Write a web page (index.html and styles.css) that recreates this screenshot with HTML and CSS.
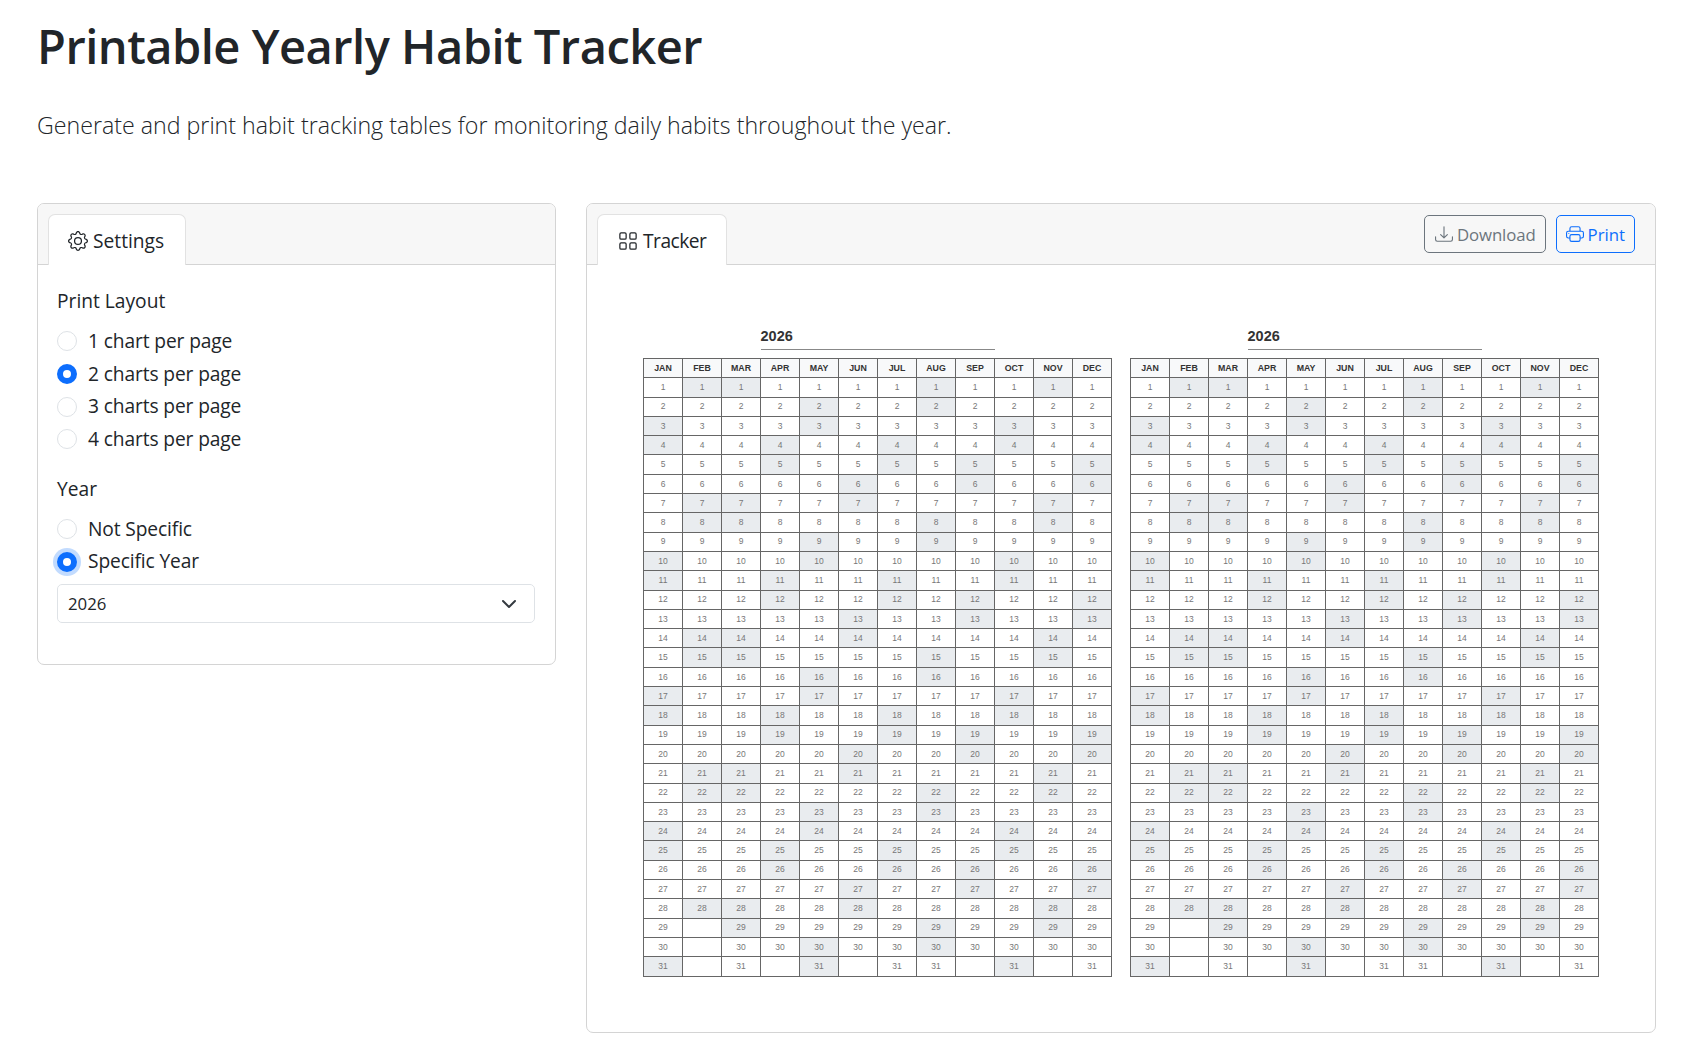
FILE: index.html
```html
<!DOCTYPE html>
<html lang="en">
<head>
  <meta charset="UTF-8">
  <meta name="viewport" content="width=device-width, initial-scale=1.0">
  <title>Printable Yearly Habit Tracker</title>
  <link rel="stylesheet" href="styles.css">
</head>
<body>
  <header class="page-head">
    <h1>Printable Yearly Habit Tracker</h1>
    <p class="lead">Generate and print habit tracking tables for monitoring daily habits throughout the year.</p>
  </header>

  <main class="layout">
    <section class="card settings">
      <div class="card-header">
        <div class="tab">
          <svg class="icon" viewBox="0 0 16 16" fill="currentColor"><path d="M8 4.754a3.246 3.246 0 1 0 0 6.492 3.246 3.246 0 0 0 0-6.492M5.754 8a2.246 2.246 0 1 1 4.492 0 2.246 2.246 0 0 1-4.492 0"/><path d="M9.796 1.343c-.527-1.79-3.065-1.79-3.592 0l-.094.319a.873.873 0 0 1-1.255.52l-.292-.16c-1.64-.892-3.433.902-2.54 2.541l.159.292a.873.873 0 0 1-.52 1.255l-.319.094c-1.79.527-1.79 3.065 0 3.592l.319.094a.873.873 0 0 1 .52 1.255l-.16.292c-.892 1.64.901 3.434 2.541 2.54l.292-.159a.873.873 0 0 1 1.255.52l.094.319c.527 1.79 3.065 1.79 3.592 0l.094-.319a.873.873 0 0 1 1.255-.52l.292.16c1.64.893 3.434-.902 2.54-2.541l-.159-.292a.873.873 0 0 1 .52-1.255l.319-.094c1.79-.527 1.79-3.065 0-3.592l-.319-.094a.873.873 0 0 1-.52-1.255l.16-.292c.893-1.64-.902-3.433-2.541-2.54l-.292.159a.873.873 0 0 1-1.255-.52zm-2.633.283c.246-.835 1.428-.835 1.674 0l.094.319a1.873 1.873 0 0 0 2.693 1.115l.291-.16c.764-.415 1.6.42 1.184 1.185l-.159.292a1.873 1.873 0 0 0 1.116 2.692l.318.094c.835.246.835 1.428 0 1.674l-.319.094a1.873 1.873 0 0 0-1.115 2.693l.16.291c.415.764-.42 1.6-1.185 1.184l-.291-.159a1.873 1.873 0 0 0-2.693 1.116l-.094.318c-.246.835-1.428.835-1.674 0l-.094-.319a1.873 1.873 0 0 0-2.692-1.115l-.292.16c-.764.415-1.6-.42-1.184-1.185l.159-.291A1.873 1.873 0 0 0 1.945 8.93l-.319-.094c-.835-.246-.835-1.428 0-1.674l.319-.094A1.873 1.873 0 0 0 3.06 4.377l-.16-.292c-.415-.764.42-1.6 1.185-1.184l.292.159a1.873 1.873 0 0 0 2.692-1.115z"/></svg>
          Settings
        </div>
      </div>
      <div class="card-body">
        <div class="group-label">Print Layout</div>
        <label class="radio"><input type="radio" name="layout"> 1 chart per page</label>
        <label class="radio"><input type="radio" name="layout" checked> 2 charts per page</label>
        <label class="radio"><input type="radio" name="layout"> 3 charts per page</label>
        <label class="radio"><input type="radio" name="layout"> 4 charts per page</label>

        <div class="group-label year-label">Year</div>
        <label class="radio"><input type="radio" name="year"> Not Specific</label>
        <label class="radio"><input type="radio" name="year" class="focused" checked> Specific Year</label>
        <select class="year-select">
          <option>2026</option>
          <option>2027</option>
        </select>
      </div>
    </section>

    <section class="card tracker">
      <div class="card-header">
        <div class="tab tab-tracker">
          <svg class="icon" viewBox="0 0 16 16" fill="currentColor"><path d="M1 2.5A1.5 1.5 0 0 1 2.5 1h3A1.5 1.5 0 0 1 7 2.5v3A1.5 1.5 0 0 1 5.5 7h-3A1.5 1.5 0 0 1 1 5.5zM2.5 2a.5.5 0 0 0-.5.5v3a.5.5 0 0 0 .5.5h3a.5.5 0 0 0 .5-.5v-3a.5.5 0 0 0-.5-.5zm6.5.5A1.5 1.5 0 0 1 10.5 1h3A1.5 1.5 0 0 1 15 2.5v3A1.5 1.5 0 0 1 13.5 7h-3A1.5 1.5 0 0 1 9 5.5zm1.5-.5a.5.5 0 0 0-.5.5v3a.5.5 0 0 0 .5.5h3a.5.5 0 0 0 .5-.5v-3a.5.5 0 0 0-.5-.5zM1 10.5A1.5 1.5 0 0 1 2.5 9h3A1.5 1.5 0 0 1 7 10.5v3A1.5 1.5 0 0 1 5.5 15h-3A1.5 1.5 0 0 1 1 13.5zm1.5-.5a.5.5 0 0 0-.5.5v3a.5.5 0 0 0 .5.5h3a.5.5 0 0 0 .5-.5v-3a.5.5 0 0 0-.5-.5zm6.5.5A1.5 1.5 0 0 1 10.5 9h3a1.5 1.5 0 0 1 1.5 1.5v3a1.5 1.5 0 0 1-1.5 1.5h-3A1.5 1.5 0 0 1 9 13.5zm1.5-.5a.5.5 0 0 0-.5.5v3a.5.5 0 0 0 .5.5h3a.5.5 0 0 0 .5-.5v-3a.5.5 0 0 0-.5-.5z"/></svg>
          Tracker
        </div>
        <div class="actions">
          <button class="btn btn-grey">
            <svg class="icon" viewBox="0 0 16 16" fill="currentColor"><path d="M.5 9.9a.5.5 0 0 1 .5.5v2.5a1 1 0 0 0 1 1h12a1 1 0 0 0 1-1v-2.5a.5.5 0 0 1 1 0v2.5a2 2 0 0 1-2 2H2a2 2 0 0 1-2-2v-2.5a.5.5 0 0 1 .5-.5"/><path d="M7.646 11.854a.5.5 0 0 0 .708 0l3-3a.5.5 0 0 0-.708-.708L8.5 10.293V1.5a.5.5 0 0 0-1 0v8.793L5.354 8.146a.5.5 0 1 0-.708.708z"/></svg>
            Download
          </button>
          <button class="btn btn-blue">
            <svg class="icon" viewBox="0 0 16 16" fill="currentColor"><path d="M2.5 8a.5.5 0 1 0 0-1 .5.5 0 0 0 0 1"/><path d="M5 1a2 2 0 0 0-2 2v2H2a2 2 0 0 0-2 2v3a2 2 0 0 0 2 2h1v1a2 2 0 0 0 2 2h6a2 2 0 0 0 2-2v-1h1a2 2 0 0 0 2-2V7a2 2 0 0 0-2-2h-1V3a2 2 0 0 0-2-2zM4 3a1 1 0 0 1 1-1h6a1 1 0 0 1 1 1v2H4zm1 5a2 2 0 0 0-2 2v1H2a1 1 0 0 1-1-1V7a1 1 0 0 1 1-1h12a1 1 0 0 1 1 1v3a1 1 0 0 1-1 1h-1v-1a2 2 0 0 0-2-2zm7 2v3a1 1 0 0 1-1 1H5a1 1 0 0 1-1-1v-3a1 1 0 0 1 1-1h6a1 1 0 0 1 1 1"/></svg>
            Print
          </button>
        </div>
      </div>
      <div class="charts">
        <div class="chart"><div class="chart-title">2026</div><table class="chart-table"></table></div>
        <div class="chart"><div class="chart-title">2026</div><table class="chart-table"></table></div>
      </div>
    </section>
  </main>

  <script src="script.js"></script>
</body>
</html>
```
FILE: styles.css
```css
* {
  box-sizing: border-box;
}
body {
  margin: 0;
  padding: 0 36px 22px 37px;
  font-family: "Open Sans", "Noto Sans", sans-serif;
  font-size: 19.2px;
  line-height: 1.5;
  color: #212529;
  background-color: #fff;
}
.page-head {
  height: 203px;
  padding-top: 17px;
}
h1 {
  margin: 0;
  font-size: 47px;
  font-weight: 600;
  line-height: 58px;
  letter-spacing: -0.5px;
}
.lead {
  margin: 32px 0 0;
  font-size: 23.2px;
  font-weight: 300;
  line-height: 36px;
}
.layout {
  display: grid;
  grid-template-columns: 519px 1fr;
  gap: 30px;
  align-items: start;
}
.card {
  border: 1px solid #d4d4d4;
  border-radius: 7px;
  overflow: hidden;
}
.card-header {
  display: flex;
  justify-content: space-between;
  height: 61px;
  padding: 10px 20px 0 10px;
  background-color: #f7f7f7;
  border-bottom: 1px solid #d4d4d4;
}
.tab {
  display: flex;
  align-items: center;
  gap: 5px;
  height: 51px;
  padding: 2px 21px 0 19px;
  background-color: #fff;
  border: 1px solid #e2e2e2;
  border-bottom: none;
  border-radius: 7px 7px 0 0;
}
.tab-tracker {
  padding-left: 20px;
  padding-right: 20px;
  letter-spacing: -0.5px;
}
.icon {
  width: 20px;
  height: 20px;
  flex: none;
}
.actions {
  display: flex;
  gap: 10px;
  height: 38px;
  margin-top: 1px;
}
.btn {
  display: flex;
  align-items: center;
  gap: 4px;
  padding: 0 9px;
  font-family: inherit;
  font-size: 16.8px;
  background: transparent;
  border: 1px solid;
  border-radius: 5px;
}
.btn .icon {
  width: 18px;
  height: 18px;
}
.btn-grey {
  padding-left: 10px;
  letter-spacing: -0.12px;
  color: #6c757d;
  border-color: #6c757d;
}
.btn-blue {
  color: #0d6efd;
  border-color: #0d6efd;
}
.card-body {
  padding: 21px 20px 41px 19px;
}
.group-label {
  margin-bottom: 10px;
  line-height: 29px;
}
.year-label {
  margin-top: 18px;
}
.radio {
  display: flex;
  align-items: center;
  gap: 11px;
  height: 32.7px;
  letter-spacing: -0.12px;
}
.radio input {
  appearance: none;
  width: 20px;
  height: 20px;
  margin: 0;
  background-color: #fff;
  border: 1px solid #dee2e6;
  border-radius: 50%;
}
.radio input:checked {
  background-color: #fff;
  border: 6px solid #0d6efd;
}
.radio input.focused {
  box-shadow: 0 0 0 4px rgba(13, 110, 253, 0.25);
}
.year-select {
  display: block;
  width: 100%;
  height: 39px;
  margin-top: 6px;
  padding: 0 10px;
  font-family: inherit;
  font-size: 16.8px;
  color: #212529;
  appearance: none;
  background: #fff url("data:image/svg+xml,%3csvg xmlns='http://www.w3.org/2000/svg' viewBox='0 0 16 16'%3e%3cpath fill='none' stroke='%23343a40' stroke-linecap='round' stroke-linejoin='round' stroke-width='2' d='m2 5 6 6 6-6'/%3e%3c/svg%3e") no-repeat right 17px center / 16px 16px;
  border: 1px solid #dee2e6;
  border-radius: 5px;
}
.charts {
  display: flex;
  justify-content: center;
  gap: 18px;
  padding: 59px 0 55px;
}
.chart {
  width: 469px;
  font-family: "Liberation Sans", Arial, sans-serif;
}
.chart-title {
  width: 234px;
  height: 26px;
  margin: 0 auto 8px;
  font-size: 14.5px;
  font-weight: bold;
  line-height: 24px;
  color: #333;
  border-bottom: 1.5px solid #888;
}
.chart-table {
  width: 469px;
  height: 617px;
  table-layout: fixed;
  border-collapse: collapse;
  border: 1px solid #555;
}
.chart-table th, .chart-table td {
  height: 19.3px;
  padding: 0;
  text-align: center;
  border: 1px solid #666;
}
.chart-table th {
  font-size: 8.8px;
  color: #333;
  background-color: #f8f9fa;
}
.chart-table td {
  font-size: 8.5px;
  color: #777;
}
.chart-table td.weekend {
  background-color: #e9ecef;
}
```
FILE: script.js
```js
const months = ['JAN', 'FEB', 'MAR', 'APR', 'MAY', 'JUN', 'JUL', 'AUG', 'SEP', 'OCT', 'NOV', 'DEC'];
const year = 2026;

function buildTable(table) {
  let html = '<thead><tr>' + months.map(m => `<th>${m}</th>`).join('') + '</tr></thead><tbody>';
  for (let day = 1; day <= 31; day++) {
    html += '<tr>';
    for (let month = 0; month < 12; month++) {
      const date = new Date(year, month, day);
      if (date.getMonth() !== month) {
        html += '<td></td>'; // Month is too short
        continue;
      }
      const weekend = date.getDay() === 0 || date.getDay() === 6;
      html += `<td${weekend ? ' class="weekend"' : ''}>${day}</td>`;
    }
    html += '</tr>';
  }
  table.innerHTML = html + '</tbody>';
}

document.querySelectorAll('.chart-table').forEach(buildTable);
```
